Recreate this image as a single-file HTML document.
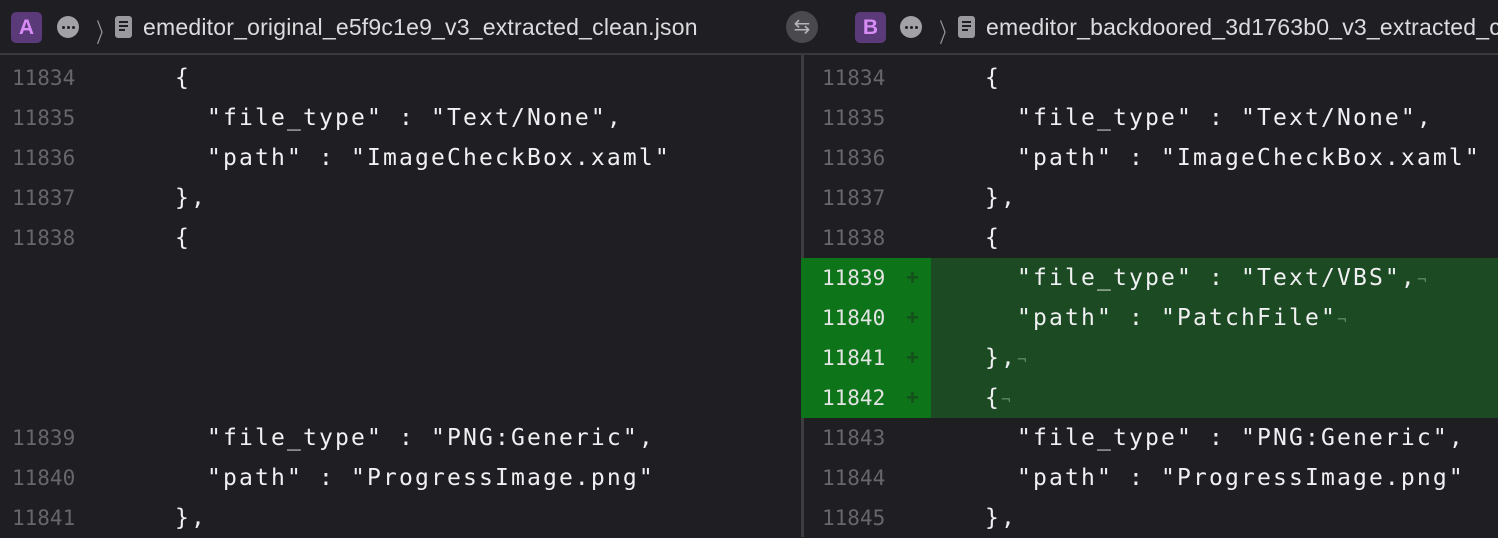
<!DOCTYPE html>
<html><head><style>
body{margin:0;width:1498px;height:537px;background:#1f1f23;overflow:hidden;position:relative;font-family:"Liberation Sans",sans-serif}
.hdr{position:absolute;left:0;top:0;width:1498px;height:53px;background:#1f1f23;border-bottom:2px solid #3a3a3d}
.badge{position:absolute;top:12px;width:31px;height:31px;border-radius:5px;background:#5a3a78;color:#d88cf5;font-weight:bold;font-size:21px;text-align:center;line-height:31px}
.dots{position:absolute;top:16px;width:22px;height:22px;border-radius:50%;background:#a2a2a6}
.dots i{position:absolute;top:10px;width:3px;height:3px;border-radius:50%;background:#1f1f23}
.chev{position:absolute;top:13px;color:#9a9a9e;font-size:26px;font-weight:300;transform:scaleX(.6)}
.fic{position:absolute;top:16px;width:17px;height:22px;border-radius:3px;background:#9a9a9e}
.fic i{position:absolute;left:4px;height:2px;background:#1f1f23}
.ttl{position:absolute;top:14px;color:#dcdcdf;font-size:23px;letter-spacing:0.2px;white-space:nowrap;overflow:hidden}
.swap{position:absolute;left:786px;top:11px;width:32px;height:32px;border-radius:50%;background:#4a4a4e;color:#b5b5b8;text-align:center;line-height:32px;font-size:20px}
.ln{position:absolute;font-family:"DejaVu Sans Mono",monospace;font-size:21px;color:#67676b;line-height:40px;height:40px;letter-spacing:0px}
.cd{position:absolute;font-family:"DejaVu Sans Mono",monospace;font-size:23px;letter-spacing:2.15px;color:#f0f0f2;line-height:40px;height:40px;white-space:pre}
.pl{position:absolute;color:#14501c;font-size:22px;line-height:40px;font-weight:bold}
.pm{color:#5a8a5f;font-size:16px}
</style></head><body>
<div class="hdr"></div>
<div class="badge" style="left:11px">A</div>
<div class="dots" style="left:57px"><i style="left:5px"></i><i style="left:10px"></i><i style="left:15px"></i></div>
<div class="chev" style="left:91px">〉</div>
<div class="fic" style="left:115px"><i style="top:5px;width:9px"></i><i style="top:9px;width:9px"></i><i style="top:13px;width:6px"></i></div>
<div class="ttl" style="left:143px">emeditor_original_e5f9c1e9_v3_extracted_clean.json</div>
<div class="swap">⇆</div>
<div class="badge" style="left:855px">B</div>
<div class="dots" style="left:900px"><i style="left:5px"></i><i style="left:10px"></i><i style="left:15px"></i></div>
<div class="chev" style="left:934px">〉</div>
<div class="fic" style="left:958px"><i style="top:5px;width:9px"></i><i style="top:9px;width:9px"></i><i style="top:13px;width:6px"></i></div>
<div class="ttl" style="left:986px;width:512px">emeditor_backdoored_3d1763b0_v3_extracted_clean.json</div>
<div style="position:absolute;left:801px;top:55px;width:3px;height:482px;background:#3d3d40"></div>
<div style="position:absolute;left:801px;top:258px;width:130px;height:160px;background:#0d741a"></div>
<div style="position:absolute;left:931px;top:258px;width:567px;height:160px;background:#1c4a23"></div>

<div class="ln" style="left:12px;top:58px">11834</div><div class="cd" style="left:175px;top:58px">{</div>
<div class="ln" style="left:12px;top:98px">11835</div><div class="cd" style="left:207px;top:98px">"file_type" : "Text/None",</div>
<div class="ln" style="left:12px;top:138px">11836</div><div class="cd" style="left:207px;top:138px">"path" : "ImageCheckBox.xaml"</div>
<div class="ln" style="left:12px;top:178px">11837</div><div class="cd" style="left:175px;top:178px">},</div>
<div class="ln" style="left:12px;top:218px">11838</div><div class="cd" style="left:175px;top:218px">{</div>
<div class="ln" style="left:12px;top:418px">11839</div><div class="cd" style="left:207px;top:418px">"file_type" : "PNG:Generic",</div>
<div class="ln" style="left:12px;top:458px">11840</div><div class="cd" style="left:207px;top:458px">"path" : "ProgressImage.png"</div>
<div class="ln" style="left:12px;top:498px">11841</div><div class="cd" style="left:175px;top:498px">},</div>

<div class="ln" style="left:822px;top:58px">11834</div><div class="cd" style="left:985px;top:58px">{</div>
<div class="ln" style="left:822px;top:98px">11835</div><div class="cd" style="left:1017px;top:98px">"file_type" : "Text/None",</div>
<div class="ln" style="left:822px;top:138px">11836</div><div class="cd" style="left:1017px;top:138px">"path" : "ImageCheckBox.xaml"</div>
<div class="ln" style="left:822px;top:178px">11837</div><div class="cd" style="left:985px;top:178px">},</div>
<div class="ln" style="left:822px;top:218px">11838</div><div class="cd" style="left:985px;top:218px">{</div>
<div class="ln" style="left:822px;top:258px;color:#e4e4e4">11839</div><div class="pl" style="left:906px;top:258px">+</div><div class="cd" style="left:1017px;top:258px">"file_type" : "Text/VBS",<span class="pm">¬</span></div>
<div class="ln" style="left:822px;top:298px;color:#e4e4e4">11840</div><div class="pl" style="left:906px;top:298px">+</div><div class="cd" style="left:1017px;top:298px">"path" : "PatchFile"<span class="pm">¬</span></div>
<div class="ln" style="left:822px;top:338px;color:#e4e4e4">11841</div><div class="pl" style="left:906px;top:338px">+</div><div class="cd" style="left:985px;top:338px">},<span class="pm">¬</span></div>
<div class="ln" style="left:822px;top:378px;color:#e4e4e4">11842</div><div class="pl" style="left:906px;top:378px">+</div><div class="cd" style="left:985px;top:378px">{<span class="pm">¬</span></div>
<div class="ln" style="left:822px;top:418px">11843</div><div class="cd" style="left:1017px;top:418px">"file_type" : "PNG:Generic",</div>
<div class="ln" style="left:822px;top:458px">11844</div><div class="cd" style="left:1017px;top:458px">"path" : "ProgressImage.png"</div>
<div class="ln" style="left:822px;top:498px">11845</div><div class="cd" style="left:985px;top:498px">},</div>
</body></html>
